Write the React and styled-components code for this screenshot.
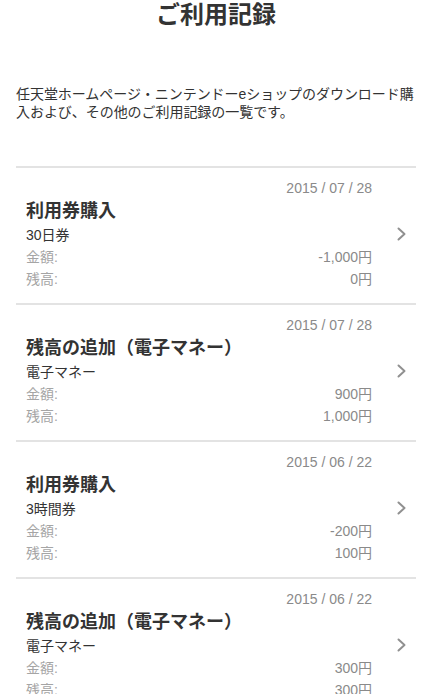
import React from "react";
import styled, { createGlobalStyle } from "styled-components";

const GlobalStyle = createGlobalStyle`
  html, body {
    margin: 0;
    padding: 0;
    background: #ffffff;
  }
  body {
    font-family: "Liberation Sans", "Noto Sans CJK JP", sans-serif;
    color: #333333;
    -webkit-font-smoothing: antialiased;
  }
`;

const Page = styled.main`
  width: 440px;
  box-sizing: border-box;
  padding: 0 24px 0 16px;
`;

const Title = styled.h1`
  margin: 0;
  font-size: 24px;
  line-height: 30px;
  font-weight: 700;
  text-align: center;
  color: #333333;
`;

const Description = styled.p`
  margin: 55px 0 45px;
  font-size: 14px;
  line-height: 18px;
  letter-spacing: -0.05px;
  color: #333333;
`;

const List = styled.ul`
  list-style: none;
  margin: 0;
  padding: 0;
  border-top: 2px solid #e3e3e3;
`;

const Item = styled.li`
  display: flex;
  align-items: center;
  padding: 10px 0 13px 10px;
  border-bottom: 2px solid #e3e3e3;
`;

const Body = styled.div`
  flex: 1;
  display: flex;
  flex-direction: column;
`;

const DateText = styled.div`
  text-align: right;
  font-size: 14px;
  line-height: 20px;
  color: #8a8a8a;
`;

const ItemTitle = styled.div`
  font-size: 18px;
  line-height: 26px;
  font-weight: 700;
  color: #333333;
`;

const SubTitle = styled.div`
  font-size: 14px;
  line-height: 22px;
  color: #333333;
`;

const DetailRow = styled.div`
  display: flex;
  justify-content: space-between;
  font-size: 14px;
  line-height: 22px;
`;

const Label = styled.span`
  color: #a5a5a5;
`;

const Value = styled.span`
  color: #8a8a8a;
`;

const ChevronCell = styled.div`
  width: 44px;
  display: flex;
  justify-content: flex-start;
  padding-left: 25px;
  box-sizing: border-box;
`;

const Chevron = () => (
  <svg width="10" height="14" viewBox="0 0 10 14" fill="none">
    <polyline
      points="1.5,1.5 7.5,7 1.5,12.5"
      stroke="#909090"
      strokeWidth="2"
      strokeLinecap="round"
      strokeLinejoin="round"
    />
  </svg>
);

const records = [
  { date: "2015 / 07 / 28", title: "利用券購入", sub: "30日券", amount: "-1,000円", balance: "0円" },
  { date: "2015 / 07 / 28", title: "残高の追加（電子マネー）", sub: "電子マネー", amount: "900円", balance: "1,000円" },
  { date: "2015 / 06 / 22", title: "利用券購入", sub: "3時間券", amount: "-200円", balance: "100円" },
  { date: "2015 / 06 / 22", title: "残高の追加（電子マネー）", sub: "電子マネー", amount: "300円", balance: "300円" },
];

export default function App() {
  return (
    <>
      <GlobalStyle />
      <Page>
        <Title>ご利用記録</Title>
        <Description>
          任天堂ホームページ・ニンテンドーeショップのダウンロード購入および、その他のご利用記録の一覧です。
        </Description>
        <List>
          {records.map((r, i) => (
            <Item key={i}>
              <Body>
                <DateText>{r.date}</DateText>
                <ItemTitle>{r.title}</ItemTitle>
                <SubTitle>{r.sub}</SubTitle>
                <DetailRow>
                  <Label>金額:</Label>
                  <Value>{r.amount}</Value>
                </DetailRow>
                <DetailRow>
                  <Label>残高:</Label>
                  <Value>{r.balance}</Value>
                </DetailRow>
              </Body>
              <ChevronCell>
                <Chevron />
              </ChevronCell>
            </Item>
          ))}
        </List>
      </Page>
    </>
  );
}
